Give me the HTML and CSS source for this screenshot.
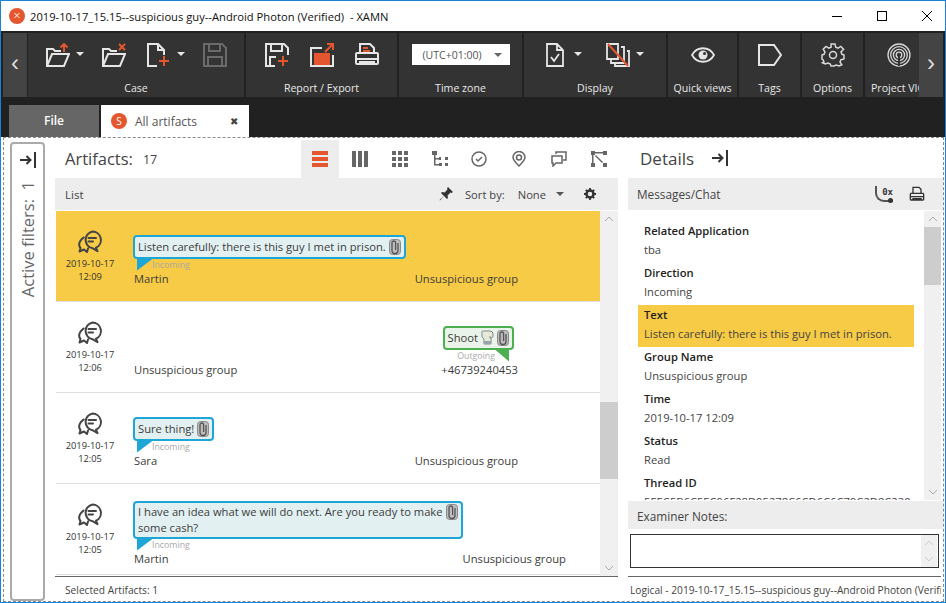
FILE: index.html
```html
<!DOCTYPE html>
<html lang="en">
<head>
  <meta charset="UTF-8">
  <meta name="viewport" content="width=device-width, initial-scale=1.0">
  <title>XAMN</title>
  <link rel="stylesheet" href="styles.css">
</head>
<body>
  <!-- shared icons -->
  <svg class="defs">
    <symbol id="chat" viewBox="0 0 24 24">
      <path d="M14.5 1.5a8.5 8.5 0 0 1 3.5 16.2l1.5 3.5-5-3a8.5 8.5 0 0 1 0-16.700zM10.500 8h7.500M10.500 11.500h4.500M5.500 7.500C1.500 11 0 15 2.500 18l-1 3.500 4.500-2 3 2.500 1-3.500" fill="none" stroke="currentColor" stroke-width="2" stroke-linejoin="round" stroke-linecap="round"/>
    </symbol>
    <symbol id="clip" viewBox="0 0 12 16">
      <rect x="0.500" y="0.500" width="11" height="15" rx="3" fill="#bdbdbd" stroke="#8a8a8a"/>
      <path d="M9 4v7.500a3 3 0 0 1-6 0V3.800a1.800 1.800 0 0 1 3.600 0V11" fill="none" stroke="#555" stroke-width="1.300"/>
    </symbol>
    <symbol id="arrowbar" viewBox="0 0 18 18">
      <path d="M1 9h10M7.500 5l4 4-4 4" fill="none" stroke="#333" stroke-width="2"/>
      <path d="M16 1v16" stroke="#333" stroke-width="2"/>
    </symbol>
    <symbol id="printer" viewBox="0 0 24 24">
      <path d="M6 11V2h9l3 3v6M3 11h18a2 2 0 0 1 1 2v7a1 1 0 0 1-1 1H3a1 1 0 0 1-1-1v-7a2 2 0 0 1 1-2zM2 16h20M6 21v-2h12v2" fill="none" stroke="currentColor" stroke-width="2"/>
    </symbol>
  </svg>

  <div class="window">
    <header class="titlebar">
      <span class="app-badge">&#215;</span>
      <span class="app-title">2019-10-17_15.15--suspicious guy--Android Photon (Verified)&nbsp; - XAMN</span>
      <div class="win-buttons">
        <svg width="12" height="12" viewBox="0 0 12 12"><path d="M1 6.500h10" stroke="#000"/></svg>
        <svg width="12" height="12" viewBox="0 0 12 12"><rect x="1.500" y="1.500" width="9" height="9" fill="none" stroke="#000"/></svg>
        <svg width="12" height="12" viewBox="0 0 12 12"><path d="M1 1l10 10M11 1L1 11" stroke="#000"/></svg>
      </div>
    </header>

    <div class="ribbon">
      <button class="ribbon-nav">&#8249;</button>
      <section class="group group-case">
        <div class="tools">
          <svg class="ico" width="24" height="24" viewBox="0 0 24 24"><path d="M1 23V6h6l2 2h6M1 23h17l5-12H6z" fill="none" stroke="#e6e6e6" stroke-width="2"/><path d="M18 9V1M14.500 4.500L18 1l3.500 3.500" fill="none" stroke="#e4572e" stroke-width="2"/></svg>
          <span class="caret"></span>
          <svg class="ico gap-folder" width="24" height="24" viewBox="0 0 24 24"><path d="M1 23V6h6l2 2h6M1 23h17l5-12H6z" fill="none" stroke="#e6e6e6" stroke-width="2"/><path d="M17 1l6 6M23 1l-6 6" stroke="#e4572e" stroke-width="2"/></svg>
          <svg class="ico gap-new" width="24" height="24" viewBox="0 0 24 24"><path d="M10 23H1V1h10l6 6v5M11 1v6h6" fill="none" stroke="#e6e6e6" stroke-width="2"/><path d="M17 13v10M12 18h10" stroke="#e4572e" stroke-width="2"/></svg>
          <span class="caret"></span>
          <svg class="ico gap-save" width="24" height="24" viewBox="0 0 24 24"><path d="M1 1h18l4 4v18H1zM6 1v7h11V1M5 23v-9h14v9" fill="none" stroke="#6a6a6a" stroke-width="2"/></svg>
        </div>
        <div class="group-label">Case</div>
      </section>
      <section class="group group-report">
        <div class="tools">
          <svg class="ico" width="24" height="24" viewBox="0 0 24 24"><path d="M10 23H1V1h18l4 4v7M6 1v7h11V1M5 23v-9h6" fill="none" stroke="#e6e6e6" stroke-width="2"/><path d="M18 13v10M13 18h10" stroke="#e4572e" stroke-width="2"/></svg>
          <svg class="ico gap-report" width="24" height="24" viewBox="0 0 24 24"><path d="M12 5H1v18h22V12" fill="none" stroke="#e6e6e6" stroke-width="2"/><path d="M15 9l8-8M17 1h6v6M5 11h14v2H5zM5 15h14v2H5zM5 19h14v2H5z" fill="none" stroke="#e4572e" stroke-width="2"/></svg>
          <svg class="ico gap-report" width="24" height="24" viewBox="0 0 24 24"><path d="M5 10V1h10l4 4v5M2 10h20a1 1 0 0 1 1 1v9a1 1 0 0 1-1 1H2a1 1 0 0 1-1-1v-9a1 1 0 0 1 1-1zM1 16h22M5 21v-2h14v2" fill="none" stroke="#e6e6e6" stroke-width="2"/><path d="M8 5h5M8 8h7" stroke="#e4572e" stroke-width="2"/></svg>
        </div>
        <div class="group-label">Report / Export</div>
      </section>
      <section class="group group-time">
        <div class="tools">
          <div class="tz-select"><span>(UTC+01:00)</span><span class="caret caret-dark"></span></div>
        </div>
        <div class="group-label">Time zone</div>
      </section>
      <section class="group group-display">
        <div class="tools">
          <svg class="ico" width="18" height="24" viewBox="0 0 18 24"><path d="M1 1h10l6 6v16H1zM11 1v6h6M5 14l3 4 5-7" fill="none" stroke="#e6e6e6" stroke-width="1.800"/></svg>
          <span class="caret gap-caret"></span>
          <svg class="ico gap-docs" width="24" height="24" viewBox="0 0 24 24"><path d="M1 1h11v15H1zM15 4h3v16H5v-3M21 8h2v15H9v-2" fill="none" stroke="#e6e6e6" stroke-width="1.800"/><path d="M2 1l20 22" stroke="#e4572e" stroke-width="2"/></svg>
          <span class="caret"></span>
        </div>
        <div class="group-label">Display</div>
      </section>
      <section class="group group-quick">
        <div class="tools">
          <svg width="24" height="16" viewBox="0 0 24 16"><path d="M1 8c5-9 17-9 22 0-5 9-17 9-22 0z" fill="none" stroke="#e6e6e6" stroke-width="1.800"/><circle cx="12" cy="8" r="4.500" fill="#e6e6e6"/><circle cx="13.500" cy="6.500" r="1.500" fill="#333"/></svg>
        </div>
        <div class="group-label">Quick views</div>
      </section>
      <section class="group group-tags">
        <div class="tools">
          <svg width="24" height="22" viewBox="0 0 24 22"><path d="M1 1h15l7 10-7 10H1z" fill="none" stroke="#e6e6e6" stroke-width="2"/></svg>
        </div>
        <div class="group-label">Tags</div>
      </section>
      <section class="group group-options">
        <div class="tools">
          <svg width="24" height="24" viewBox="0 0 24 24"><path d="M10 1h4l.7 3.200 2.300 1 2.800-1.800 2.800 2.800L20 9l1 2.300 2 .7v4l-3 .700-1 2.300 1.800 2.800-2.800 1.200-2.800-1-2.300 1L14 23h-4l-.7-2-2.300-1-2.800 1-2.800-1.200L3 19l-1-2.300-1-.7v-4l2-.7L4 9 2.200 6.200 5 3.400 7.800 5.200l2.300-1z" fill="none" stroke="#d8d8d8" stroke-width="1.500"/><circle cx="12" cy="12" r="3.500" fill="none" stroke="#d8d8d8" stroke-width="1.500"/></svg>
        </div>
        <div class="group-label">Options</div>
      </section>
      <section class="group group-vic">
        <div class="tools">
          <svg width="24" height="24" viewBox="0 0 24 24" fill="none" stroke="#d8d8d8" stroke-width="1.300"><circle cx="12" cy="12" r="11"/><circle cx="12" cy="12" r="8.300"/><circle cx="12" cy="12" r="5.600"/><circle cx="12" cy="12" r="2.800"/><path d="M12 12v11" stroke="#333" stroke-width="2"/></svg>
        </div>
        <div class="group-label">Project VIC</div>
      </section>
      <button class="ribbon-nav ribbon-next">&#8250;</button>
    </div>

    <nav class="tabs">
      <div class="tab-file">File</div>
      <div class="tab-active">
        <span class="tab-badge">S</span>
        <span class="tab-name">All artifacts</span>
        <span class="tab-close">&#10006;</span>
      </div>
    </nav>

    <main class="content">
      <aside class="filters">
        <svg class="filters-ico" width="18" height="18"><use href="#arrowbar"/></svg>
        <span class="filters-text">Active filters: &nbsp;1</span>
      </aside>

      <section class="artifacts">
        <div class="pane-head">
          <h2 class="pane-title">Artifacts:</h2>
          <span class="pane-count">17</span>
          <div class="views">
            <span class="view view-on"><svg width="16" height="16" viewBox="0 0 16 16" fill="#e4572e"><path d="M0 0h16v4H0zM0 6h16v4H0zM0 12h16v4H0z"/></svg></span>
            <span class="view"><svg width="16" height="16" viewBox="0 0 16 16" fill="#666"><path d="M0 0h4v16H0zM6 0h4v16H6zM12 0h4v16h-4z"/></svg></span>
            <span class="view"><svg width="16" height="16" viewBox="0 0 16 16" fill="#666"><path d="M0 0h4v4H0zM6 0h4v4H6zM12 0h4v4h-4zM0 6h4v4H0zM6 6h4v4H6zM12 6h4v4h-4zM0 12h4v4H0zM6 12h4v4H6zM12 12h4v4h-4z"/></svg></span>
            <span class="view"><svg width="16" height="16" viewBox="0 0 16 16" fill="#666"><path d="M0 0h5v4H0zM2 4h1.500v9H7v1.500H2zM2 7h5v1.500H2zM7 6h2v3H7zM7 12h3v3H7zM13 6h3v3h-3zM13 12h3v3h-3z"/></svg></span>
            <span class="view"><svg width="16" height="16" viewBox="0 0 16 16" fill="none" stroke="#666" stroke-width="1.500"><circle cx="8" cy="8" r="7"/><path d="M5 8l2 2 4-4"/></svg></span>
            <span class="view"><svg width="14" height="16" viewBox="0 0 14 16" fill="none" stroke="#666" stroke-width="1.500"><path d="M7 15C3 11 1 8.500 1 6.500a6 6 0 0 1 12 0C13 8.500 11 11 7 15z"/><circle cx="7" cy="6.500" r="2.500"/></svg></span>
            <span class="view"><svg width="16" height="16" viewBox="0 0 16 16" fill="none" stroke="#666" stroke-width="1.500"><path d="M5 3V1h10v8h-3M1 5h10v7H5l-3 3v-3H1z"/></svg></span>
            <span class="view"><svg width="16" height="16" viewBox="0 0 16 16" fill="#666"><path d="M0 0h4v4H0zM12 0h4v4h-4zM0 12h4v4H0zM12 12h4v4h-4zM4 1h8v1.500H4zM1 4h1.500v8H1zM5 4l7 7-1 1-7-7z"/></svg></span>
          </div>
        </div>

        <div class="list-head">
          <span class="list-title">List</span>
          <svg class="pin" width="14" height="14" viewBox="0 0 14 14" fill="#333"><path d="M9 0l5 5-1.500 1-1-.5L8.500 8.500 9 11l-1 1-3-3-4 4.500L0.500 13 5 9 2 6l1-1 2.500.5 3-3L8 1.500z"/></svg>
          <span class="sort-label">Sort by:</span>
          <span class="sort-value">None</span>
          <span class="caret caret-sort"></span>
          <svg class="cog" width="12" height="12" viewBox="0 0 12 12"><circle cx="6" cy="6" r="3.500" fill="none" stroke="#333" stroke-width="2.500"/><path d="M6 0v12M0 6h12M1.800 1.800l8.400 8.400M10.200 1.800l-8.400 8.400" stroke="#333" stroke-width="1.800" stroke-dasharray="2.200 7.600"/></svg>
        </div>

        <div class="list-wrap">
          <div class="list">
            <article class="row row-selected">
              <div class="meta">
                <svg class="chat" width="24" height="24"><use href="#chat"/></svg>
                <div>2019-10-17</div><div>12:09</div>
              </div>
              <div class="row-body">
                <div class="msg">
                  <div class="bubble">Listen carefully: there is this guy I met in prison.<svg class="clip" width="12" height="16"><use href="#clip"/></svg></div>
                  <div class="dir"><i class="tail"></i><span>Incoming</span></div>
                  <div class="party">Martin</div>
                </div>
                <div class="party">Unsuspicious group</div>
              </div>
            </article>

            <article class="row">
              <div class="meta">
                <svg class="chat" width="24" height="24"><use href="#chat"/></svg>
                <div>2019-10-17</div><div>12:06</div>
              </div>
              <div class="row-body">
                <div class="party">Unsuspicious group</div>
                <div class="msg msg-out">
                  <div class="bubble bubble-out">Shoot<svg class="glove" width="13" height="15" viewBox="0 0 13 15"><path d="M2 1h7a3 3 0 0 1 3 3v2a2 2 0 0 1-2 2H9v-2M2 1a1.500 1.500 0 0 0-1 2.500V7l2 2v5h7V8" fill="#e8e8d8" stroke="#7d8b95"/><path d="M3 11h7v3H3z" fill="#98a4ad"/></svg><svg class="clip" width="12" height="16"><use href="#clip"/></svg></div>
                  <div class="dir dir-out"><span>Outgoing</span><i class="tail tail-out"></i></div>
                  <div class="party">+46739240453</div>
                </div>
              </div>
            </article>

            <article class="row">
              <div class="meta">
                <svg class="chat" width="24" height="24"><use href="#chat"/></svg>
                <div>2019-10-17</div><div>12:05</div>
              </div>
              <div class="row-body">
                <div class="msg">
                  <div class="bubble">Sure thing!<svg class="clip" width="12" height="16"><use href="#clip"/></svg></div>
                  <div class="dir"><i class="tail"></i><span>Incoming</span></div>
                  <div class="party">Sara</div>
                </div>
                <div class="party">Unsuspicious group</div>
              </div>
            </article>

            <article class="row">
              <div class="meta">
                <svg class="chat" width="24" height="24"><use href="#chat"/></svg>
                <div>2019-10-17</div><div>12:05</div>
              </div>
              <div class="row-body">
                <div class="msg">
                  <div class="bubble bubble-long"><span>I have an idea what we will do next. Are you ready to make<br>some cash?</span><svg class="clip" width="12" height="16"><use href="#clip"/></svg></div>
                  <div class="dir"><i class="tail"></i><span>Incoming</span></div>
                  <div class="party">Martin</div>
                </div>
                <div class="party">Unsuspicious group</div>
              </div>
            </article>
          </div>
          <div class="scrollbar">
            <svg class="chev" width="10" height="6" viewBox="0 0 10 6"><path d="M1 5l4-4 4 4" fill="none" stroke="#aaa"/></svg>
            <div class="thumb thumb-list"></div>
            <svg class="chev chev-end" width="10" height="6" viewBox="0 0 10 6"><path d="M1 1l4 4 4-4" fill="none" stroke="#aaa"/></svg>
          </div>
        </div>
        <footer class="pane-foot">Selected Artifacts: 1</footer>
      </section>

      <section class="details">
        <div class="pane-head">
          <h2 class="pane-title pane-title-details">Details</h2>
          <svg class="details-ico" width="18" height="18"><use href="#arrowbar"/></svg>
        </div>
        <div class="list-head details-head">
          <span class="details-type">Messages/Chat</span>
          <span class="hex-ico"><span>0x</span><i></i></span>
          <svg class="print-ico" width="16" height="16"><use href="#printer"/></svg>
        </div>
        <div class="fields-wrap">
          <div class="fields">
            <div class="field"><b>Related Application</b><span>tba</span></div>
            <div class="field"><b>Direction</b><span>Incoming</span></div>
            <div class="field field-hit"><b>Text</b><span>Listen carefully: there is this guy I met in prison.</span></div>
            <div class="field"><b>Group Name</b><span>Unsuspicious group</span></div>
            <div class="field"><b>Time</b><span>2019-10-17 12:09</span></div>
            <div class="field"><b>Status</b><span>Read</span></div>
            <div class="field"><b>Thread ID</b><span>5EEC5B6C5EC96F28D95278C6CD6C6C79C2D8C230</span></div>
          </div>
          <div class="scrollbar scrollbar-details">
            <svg class="chev" width="10" height="6" viewBox="0 0 10 6"><path d="M1 5l4-4 4 4" fill="none" stroke="#aaa"/></svg>
            <div class="thumb thumb-details"></div>
            <svg class="chev chev-end" width="10" height="6" viewBox="0 0 10 6"><path d="M1 1l4 4 4-4" fill="none" stroke="#aaa"/></svg>
          </div>
        </div>
        <div class="notes-head">Examiner Notes:</div>
        <div class="notes-box">
          <div class="notes-scroll">
            <svg width="10" height="6" viewBox="0 0 10 6"><path d="M1 5l4-4 4 4" fill="none" stroke="#ccc"/></svg>
            <svg width="10" height="6" viewBox="0 0 10 6"><path d="M1 1l4 4 4-4" fill="none" stroke="#ccc"/></svg>
          </div>
        </div>
        <footer class="pane-foot details-foot">Logical - 2019-10-17_15.15--suspicious guy--Android Photon (Verified)</footer>
      </section>
    </main>
  </div>
</body>
</html>
```

FILE: styles.css
```css
* {
  box-sizing: border-box;
}
html, body {
  margin: 0;
  height: 100%;
}
body {
  font-family: "Open Sans", "Noto Sans", sans-serif;
  font-size: 11.2px;
  color: #3c3c3c;
  overflow: hidden;
}
.defs {
  position: absolute;
  width: 0;
  height: 0;
}
.window {
  width: 946px;
  height: 603px;
  border: 1px solid #1883d7;
  display: flex;
  flex-direction: column;
  background: white;
}

/* title bar */
.titlebar {
  height: 30px;
  flex: none;
  display: flex;
  align-items: center;
  padding-left: 8px;
  background: white;
}
.app-badge {
  width: 16px;
  height: 16px;
  border-radius: 50%;
  background: #e4572e;
  color: #ffd9cc;
  font-size: 13px;
  line-height: 15px;
  text-align: center;
  margin-right: 5px;
}
.app-title {
  color: #111;
  font-size: 11.2px;
}
.win-buttons {
  margin-left: auto;
  margin-right: 12px;
  display: flex;
  gap: 33px;
}

/* ribbon */
.ribbon {
  flex: none;
  height: 66px;
  padding: 2px 2px 0 2px;
  background: #212121;
  display: flex;
  gap: 2px;
  overflow: hidden;
}
.ribbon-nav {
  width: 24px;
  margin-right: -1px;
  flex: none;
  background: #444;
  border: none;
  padding: 0 0 4px;
  color: #ddd;
  font-size: 24px;
  font-family: "Liberation Sans", sans-serif;
}
.ribbon-next {
  margin: 0;
  position: relative;
  left: -2px;
}
.group {
  background: #333;
  flex: none;
  display: flex;
  flex-direction: column;
  overflow: hidden;
}
.tools {
  height: 46px;
  padding-top: 10px;
  display: flex;
  align-items: flex-start;
  justify-content: center;
}
.group-label {
  text-align: center;
  color: #e8e8e8;
  font-size: 10.600px;
  white-space: nowrap;
  margin-top: 2px;
}
.group-case { width: 216px; }
.group-report { width: 151px; }
.group-time { width: 123px; }
.group-display { width: 142px; }
.group-quick { width: 69px; }
.group-tags { width: 61px; }
.group-options { width: 61px; }
.group-vic { width: 54px; }
.group-quick .tools { padding-top: 14px; }
.group-tags .tools { padding-top: 11px; }
.group-vic .group-label { text-align: left; padding-left: 6px; }
.group-vic .tools { justify-content: flex-start; padding-left: 22px; }
.ico { flex: none; }
.caret {
  flex: none;
  width: 0;
  height: 0;
  margin: 9px 0 0 6px;
  border-left: 4px solid transparent;
  border-right: 4px solid transparent;
  border-top: 4px solid #e6e6e6;
}
.caret-dark {
  border-top-color: #666;
  margin: 0;
}
.gap-folder { margin-left: 18px; }
.gap-new { margin-left: 21px; }
.gap-save { margin-left: 18px; }
.gap-report { margin-left: 21px; }
.gap-caret { margin-left: 10px; }
.gap-docs { margin-left: 24px; }
.tz-select {
  width: 98px;
  height: 21px;
  margin-top: 1px;
  padding: 0 8px 0 11px;
  background: white;
  color: #555;
  font-size: 10.500px;
  display: flex;
  align-items: center;
  justify-content: space-between;
}

/* tabs */
.tabs {
  flex: none;
  height: 40px;
  padding: 8px 0 0 8px;
  background: #212121;
  display: flex;
  gap: 2px;
}
.tab-file {
  width: 90px;
  background: #666;
  color: white;
  font-size: 12px;
  font-weight: 600;
  line-height: 32px;
  text-align: center;
}
.tab-active {
  width: 148px;
  background: white;
  display: flex;
  align-items: center;
  padding-left: 10px;
}
.tab-badge {
  width: 16px;
  height: 16px;
  border-radius: 50%;
  background: #e4572e;
  color: white;
  font-size: 10px;
  line-height: 16px;
  text-align: center;
}
.tab-name {
  margin-left: 8px;
  font-size: 12px;
  color: #555;
}
.tab-close {
  margin-left: auto;
  margin-right: 11px;
  font-size: 10px;
  color: #444;
}

/* main area */
.content {
  flex: 1;
  min-height: 0;
  margin: 0 1px 0 2px;
  border: 1px dashed #8a8a8a;
  display: flex;
}
.filters {
  width: 35px;
  flex: none;
  margin: 4px 0 0 6px;
  border: 2px solid #aaa;
  border-radius: 4px;
  display: flex;
  flex-direction: column;
  align-items: center;
  padding-top: 7px;
}
.filters-text {
  writing-mode: vertical-rl;
  transform: rotate(180deg);
  margin-top: 12px;
  font-size: 16.500px;
  color: #666;
  white-space: nowrap;
}
.artifacts {
  width: 563px;
  flex: none;
  margin-left: 10px;
  display: flex;
  flex-direction: column;
}
.details {
  flex: 1;
  min-width: 0;
  margin-left: 10px;
  display: flex;
  flex-direction: column;
}
.pane-head {
  height: 40px;
  flex: none;
  display: flex;
  align-items: center;
  padding-left: 10px;
}
.pane-title {
  margin: 0;
  font-size: 16.500px;
  font-weight: 400;
  color: #444;
}
.pane-title-details {
  padding-left: 2px;
  font-size: 17px;
}
.pane-count {
  margin-left: 10px;
  margin-top: 2px;
  font-size: 12.500px;
  color: #444;
}
.details-ico {
  margin-left: 17px;
}
.views {
  margin-left: auto;
  margin-right: -1px;
  align-self: flex-end;
  display: flex;
  padding-right: 0;
}
.view {
  width: 40px;
  height: 38px;
  display: flex;
  align-items: center;
  justify-content: center;
}
.view-on {
  width: 38px;
  margin-right: 1px;
  background: #ededed;
}
.views {
  width: 318px;
}
.list-head {
  height: 32px;
  flex: none;
  background: #ededed;
  display: flex;
  align-items: center;
  padding-left: 10px;
  font-size: 11.200px;
  color: #444;
}
.pin { margin-left: auto; }
.sort-label { margin-left: 12px; }
.sort-value { margin-left: 13px; }
.caret-sort {
  margin: 0 0 0 10px;
  border-top-color: #555;
}
.cog { margin: 0 22px 0 20px; }
.list-title { font-size: 11.500px; }

.list-wrap {
  flex: 1;
  min-height: 0;
  margin-top: 1px;
  display: flex;
}
.list {
  flex: 1;
  margin-left: 1px;
  overflow: hidden;
}
.row {
  height: 91px;
  border-bottom: 1px solid #ddd;
  display: flex;
  align-items: center;
  padding-right: 82px;
}
.row-selected {
  background: #f7cb45;
  border-bottom-color: #ddd;
}
.meta {
  width: 68px;
  flex: none;
  margin-right: 10px;
  text-align: center;
  font-size: 9.300px;
  line-height: 13px;
  color: #333;
}
.chat {
  display: block;
  margin: 0 auto 3px;
  color: #444;
}
.row-body {
  flex: 1;
  min-width: 0;
  padding-top: 9px;
  display: flex;
  justify-content: space-between;
  align-items: flex-end;
}
.party {
  line-height: 16px;
  white-space: nowrap;
}
.msg {
  display: flex;
  flex-direction: column;
  align-items: flex-start;
}
.msg-out {
  align-items: flex-end;
}
.bubble {
  margin-left: -1px;
  min-height: 24px;
  padding: 1px 3px;
  background: #e2f0f1;
  border: 2px solid #1ea7d6;
  border-radius: 4px;
  display: flex;
  align-items: center;
  gap: 3px;
  line-height: 16px;
  color: #3c3c3c;
  white-space: nowrap;
}
.bubble-long {
  align-items: flex-start;
}
.bubble-out {
  margin: 0 4px 0 0;
  background: #e9f3e9;
  border-color: #4caf50;
}
.dir {
  height: 12px;
  display: flex;
  align-items: flex-end;
  font-size: 8.800px;
  line-height: 11px;
  color: #aaa;
}
.dir span {
  margin-left: -1px;
}
.dir-out {
  margin-right: 9px;
}
.dir-out span {
  margin: 0 -8px 0 0;
  position: relative;
  top: 0;
}
.tail {
  width: 16px;
  height: 12px;
  margin-left: 3px;
  background: #1ea7d6;
  clip-path: polygon(0 0, 100% 0, 0 100%);
}
.tail-out {
  width: 14px;
  margin-left: 0;
  background: #4caf50;
  clip-path: polygon(0 0, 100% 0, 100% 100%);
  margin-right: 0;
  margin-left: 8px;
}
.scrollbar {
  width: 18px;
  flex: none;
  background: #f0f0f0;
  display: flex;
  flex-direction: column;
  align-items: center;
  padding: 5px 0;
}
.thumb {
  width: 100%;
  background: #cdcdcd;
}
.thumb-list {
  height: 77px;
  margin-top: 180px;
}
.chev { flex: none; }
.chev-end { margin-top: auto; }
.pane-foot {
  height: 25px;
  flex: none;
  border-top: 1px solid #666;
  padding-left: 10px;
  line-height: 26px;
  font-size: 10.200px;
  color: #444;
  white-space: nowrap;
  overflow: hidden;
}

/* details column */
.details-head {
  justify-content: flex-end;
  padding-left: 9px;
}
.details-type {
  margin-right: auto;
  font-size: 11.800px;
}
.hex-ico {
  position: relative;
  width: 18px;
  height: 16px;
  font-family: "DejaVu Sans Mono", monospace;
  font-size: 9px;
  font-weight: 700;
  line-height: 12px;
  text-align: right;
  color: #333;
  border-left: 2px solid #555;
  border-bottom: 2px solid #555;
  border-radius: 0 0 0 9px;
}
.hex-ico i {
  position: absolute;
  right: 0;
  bottom: -3px;
  width: 5px;
  height: 5px;
  border-radius: 50%;
  background: #333;
}
.print-ico {
  margin: 0 18px 0 16px;
  color: #333;
}
.fields-wrap {
  flex: 1;
  min-height: 0;
  margin-top: 1px;
  display: flex;
  padding-right: 2px;
}
.fields {
  flex: 1;
  min-width: 0;
  padding: 10px 10px 0;
  overflow: hidden;
}
.field {
  height: 42px;
  padding: 0 6px;
  display: flex;
  flex-direction: column;
  line-height: 19px;
  color: #444;
  white-space: nowrap;
}
.field b {
  font-weight: 600;
  color: #222;
}
.field-hit {
  background: #f7cb45;
}
.scrollbar-details {
  width: 17px;
}
.thumb-details {
  height: 58px;
  margin-top: 5px;
}
.notes-head {
  height: 28px;
  flex: none;
  margin: 1px 0 0;
  padding-left: 9px;
  background: #ededed;
  font-size: 11.800px;
  line-height: 30px;
  color: #444;
}
.notes-box {
  height: 34px;
  flex: none;
  margin: 5px 4px 8px 2px;
  border: 1px solid #333;
  display: flex;
  justify-content: flex-end;
  padding-right: 1px;
}
.notes-scroll {
  width: 16px;
  background: #f0f0f0;
  display: flex;
  flex-direction: column;
  align-items: center;
  justify-content: space-around;
}
.details-foot {
  margin-right: 2px;
  padding-left: 2px;
}
```
